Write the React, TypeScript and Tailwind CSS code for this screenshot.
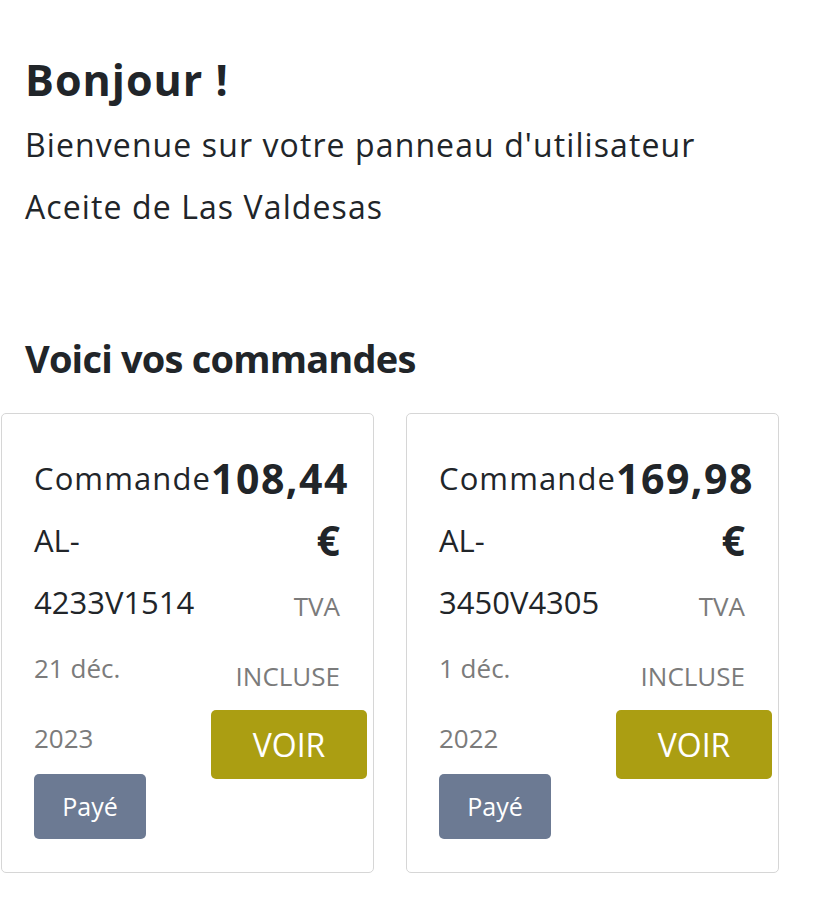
import React from "react";

type Order = {
  ref: string;
  amount: string;
  day: string;
  year: string;
};

const orders: Order[] = [
  { ref: "AL-4233V1514", amount: "108,44", day: "21 déc.", year: "2023" },
  { ref: "AL-3450V4305", amount: "169,98", day: "1 déc.", year: "2022" },
];

function OrderCard({ o }: { o: Order }) {
  const [a, b] = o.ref.split("-");
  return (
    <div className="w-[373px] h-[460px] shrink-0 border border-[#d6d6d6] rounded-[5px] bg-white pt-[33px] pl-[32px]">
      <div className="flex">
        <div className="w-[177px] shrink-0">
          <div className="text-[31px] leading-[62px] text-[#212529] w-[177px]">
            <span className="tracking-[1.1px]">Commande</span> {a}-<br />
            {b}
          </div>
          <div className="text-[26px] leading-[70px] text-[#7b7b7b]">
            <div>{o.day}</div>
            <div>{o.year}</div>
          </div>
          <div className="mt-[1px] w-[112px] h-[65px] rounded-[5px] bg-[#6c7a93] text-white text-[25px] flex items-center justify-center">
            Payé
          </div>
        </div>
        <div className="w-[129px] shrink-0 text-right">
          <div className="text-[41px] leading-[62px] font-bold tracking-[1.5px] text-[#212529] whitespace-nowrap">
            {o.amount}
          </div>
          <div className="text-[41px] leading-[62px] font-bold text-[#212529]">€</div>
          <div className="text-[26px] leading-[70px] text-[#7b7b7b]">
            <div>TVA</div>
            <div>INCLUSE</div>
          </div>
          <div className="-mt-[1px] w-[156px] h-[69px] rounded-[5px] bg-[#ab9e12] text-white text-[32px] flex items-center justify-center">
            VOIR
          </div>
        </div>
      </div>
    </div>
  );
}

export default function App() {
  return (
    <div
      className="w-[828px] min-h-[902px] bg-white text-[#212529]"
      style={{ fontFamily: '"Open Sans", "Noto Sans", sans-serif' }}
    >
      <div className="pl-[25px] pt-[50px]">
        <h1 className="text-[43px] leading-[60px] font-bold tracking-[1px]">Bonjour !</h1>
        <p className="mt-[4px] text-[32px] leading-[62px] tracking-[1.1px]">
          Bienvenue sur votre panneau d'utilisateur
        </p>
        <p className="text-[32px] leading-[62px] tracking-[1.1px]">Aceite de Las Valdesas</p>
        <h2 className="mt-[92px] text-[38px] leading-[56px] font-bold tracking-[-0.8px]">
          Voici vos commandes
        </h2>
      </div>
      <div className="mt-[27px] pl-[1px] flex gap-[32px]">
        {orders.map((o) => (
          <OrderCard key={o.ref} o={o} />
        ))}
      </div>
    </div>
  );
}
